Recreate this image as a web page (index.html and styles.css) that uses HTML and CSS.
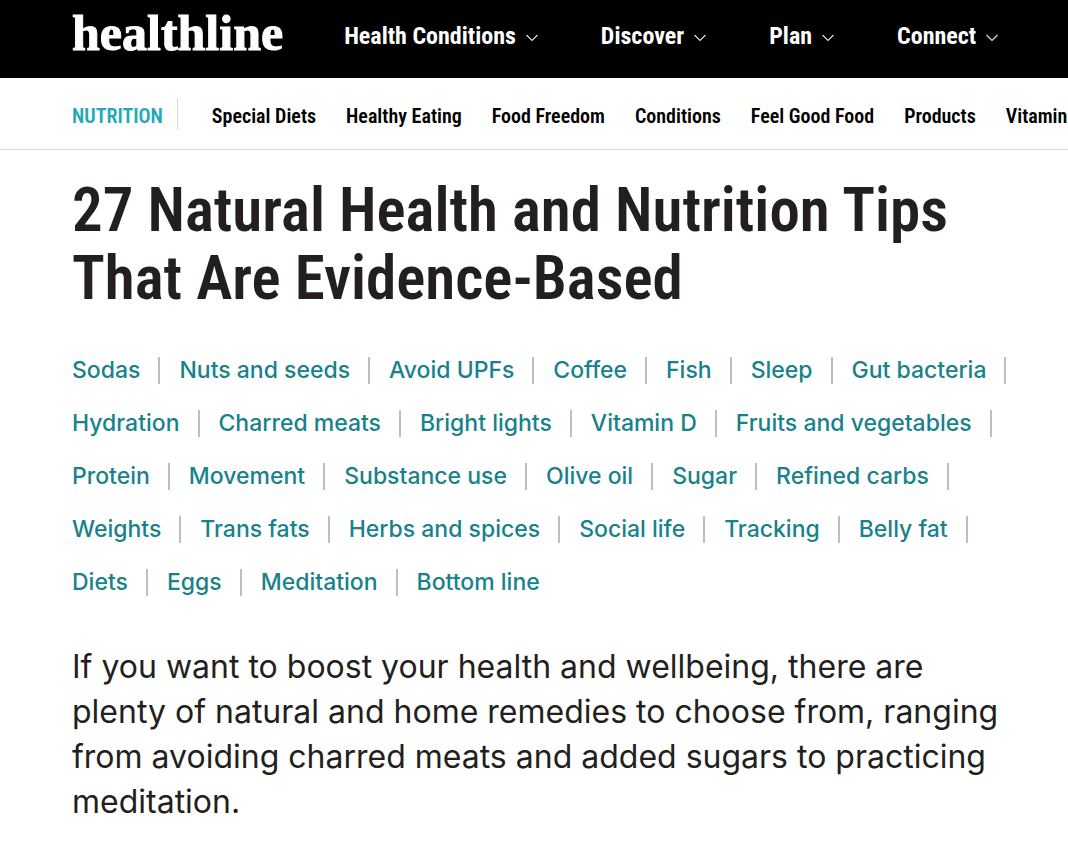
FILE: index.html
```html
<!DOCTYPE html>
<html lang="en">
<head>
<meta charset="utf-8">
<meta name="viewport" content="width=device-width, initial-scale=1">
<title>27 Natural Health and Nutrition Tips That Are Evidence-Based</title>
<link rel="stylesheet" href="styles.css">
</head>
<body>
<header class="site-header">
  <a class="logo" href="#">healthline</a>
  <nav class="main-nav" aria-label="Main">
    <button class="menu-button" type="button">Health Conditions<svg class="chevron" viewBox="0 0 12 8" aria-hidden="true"><path d="M.5 1 6 6.500 11.500 1"/></svg></button>
    <button class="menu-button" type="button">Discover<svg class="chevron" viewBox="0 0 12 8" aria-hidden="true"><path d="M.5 1 6 6.500 11.500 1"/></svg></button>
    <button class="menu-button" type="button">Plan<svg class="chevron" viewBox="0 0 12 8" aria-hidden="true"><path d="M.5 1 6 6.500 11.500 1"/></svg></button>
    <button class="menu-button" type="button">Connect<svg class="chevron" viewBox="0 0 12 8" aria-hidden="true"><path d="M.5 1 6 6.500 11.500 1"/></svg></button>
  </nav>
</header>
<nav class="sub-nav" aria-label="Nutrition">
  <a class="section-link" href="#">NUTRITION</a>
  <div class="topics">
    <a href="#">Special Diets</a>
    <a href="#">Healthy Eating</a>
    <a href="#">Food Freedom</a>
    <a href="#">Conditions</a>
    <a href="#">Feel Good Food</a>
    <a href="#">Products</a>
    <a href="#">Vitamins</a>
  </div>
</nav>
<main class="article">
  <h1 class="title">27 Natural Health and Nutrition Tips That Are Evidence-Based</h1>
  <ul class="jump-links">
    <li><a href="#">Sodas</a></li>
    <li><a href="#">Nuts and seeds</a></li>
    <li><a href="#">Avoid UPFs</a></li>
    <li><a href="#">Coffee</a></li>
    <li><a href="#">Fish</a></li>
    <li><a href="#">Sleep</a></li>
    <li><a href="#">Gut bacteria</a></li>
    <li><a href="#">Hydration</a></li>
    <li><a href="#">Charred meats</a></li>
    <li><a href="#">Bright lights</a></li>
    <li><a href="#">Vitamin D</a></li>
    <li><a href="#">Fruits and vegetables</a></li>
    <li><a href="#">Protein</a></li>
    <li><a href="#">Movement</a></li>
    <li><a href="#">Substance use</a></li>
    <li><a href="#">Olive oil</a></li>
    <li><a href="#">Sugar</a></li>
    <li><a href="#">Refined carbs</a></li>
    <li><a href="#">Weights</a></li>
    <li><a href="#">Trans fats</a></li>
    <li><a href="#">Herbs and spices</a></li>
    <li><a href="#">Social life</a></li>
    <li><a href="#">Tracking</a></li>
    <li><a href="#">Belly fat</a></li>
    <li><a href="#">Diets</a></li>
    <li><a href="#">Eggs</a></li>
    <li><a href="#">Meditation</a></li>
    <li><a href="#">Bottom line</a></li>
  </ul>
  <p class="intro">If you want to boost your health and wellbeing, there are plenty of natural and home remedies to choose from, ranging from avoiding charred meats and added sugars to practicing meditation.</p>
</main>
</body>
</html>
```
FILE: styles.css
```css
* {
  box-sizing: border-box;
}

body {
  margin: 0;
  background: #fff;
  color: #231f20;
  font-family: Inter, "Liberation Sans", sans-serif;
}

a {
  color: inherit;
  text-decoration: none;
}

.site-header {
  display: flex;
  align-items: center;
  gap: 61px;
  padding: 0 48px 6px 72px;
  height: 78px;
  background: #000;
  color: #fff;
}

.logo {
  padding-bottom: 6px;
  font: 700 50px/66px "Liberation Serif", serif;
  -webkit-text-stroke: 1px #fff;
}

.main-nav {
  display: flex;
  gap: 63px;
}

.menu-button {
  display: flex;
  align-items: center;
  gap: 10px;
  padding: 0;
  border: 0;
  background: none;
  color: inherit;
  font: 700 24px/32px "Roboto Condensed", Roboto, sans-serif;
  white-space: nowrap;
}

.chevron {
  width: 12px;
  height: 8px;
  margin-top: 4px;
  fill: none;
  stroke: #ddd;
  stroke-width: 1.2;
}

.sub-nav {
  display: flex;
  align-items: center;
  gap: 34px;
  height: 72px;
  padding-left: 72px;
  overflow: hidden;
  border-bottom: 1px solid #d8d8d8;
  font: 600 20px/28px "Roboto Condensed", Roboto, sans-serif;
  white-space: nowrap;
}

.section-link {
  padding: 4px 14px 0 0;
  border-right: 1px solid #d8d8d8;
  color: #21a9b7;
}

.topics {
  display: flex;
  gap: 30px;
  padding-top: 4px;
  color: #000;
}

.article {
  padding: 26px 48px 28px 72px;
}

.title {
  margin: 0;
  font: 600 61px/68px "Roboto Condensed", Roboto, sans-serif;
}

.jump-links {
  display: flex;
  flex-wrap: wrap;
  gap: 26px 19px;
  margin: 45px 0 0;
  padding: 0;
  list-style: none;
  color: #17828b;
  font-size: 23px;
  font-weight: 500;
  line-height: 27px;
}

.jump-links li {
  padding-right: 18px;
  border-right: 2px solid #babec8;
}

.jump-links li:last-child {
  border-right: 0;
}

.intro {
  margin: 48px 0 0;
  font-size: 32px;
  line-height: 45px;
}
```
